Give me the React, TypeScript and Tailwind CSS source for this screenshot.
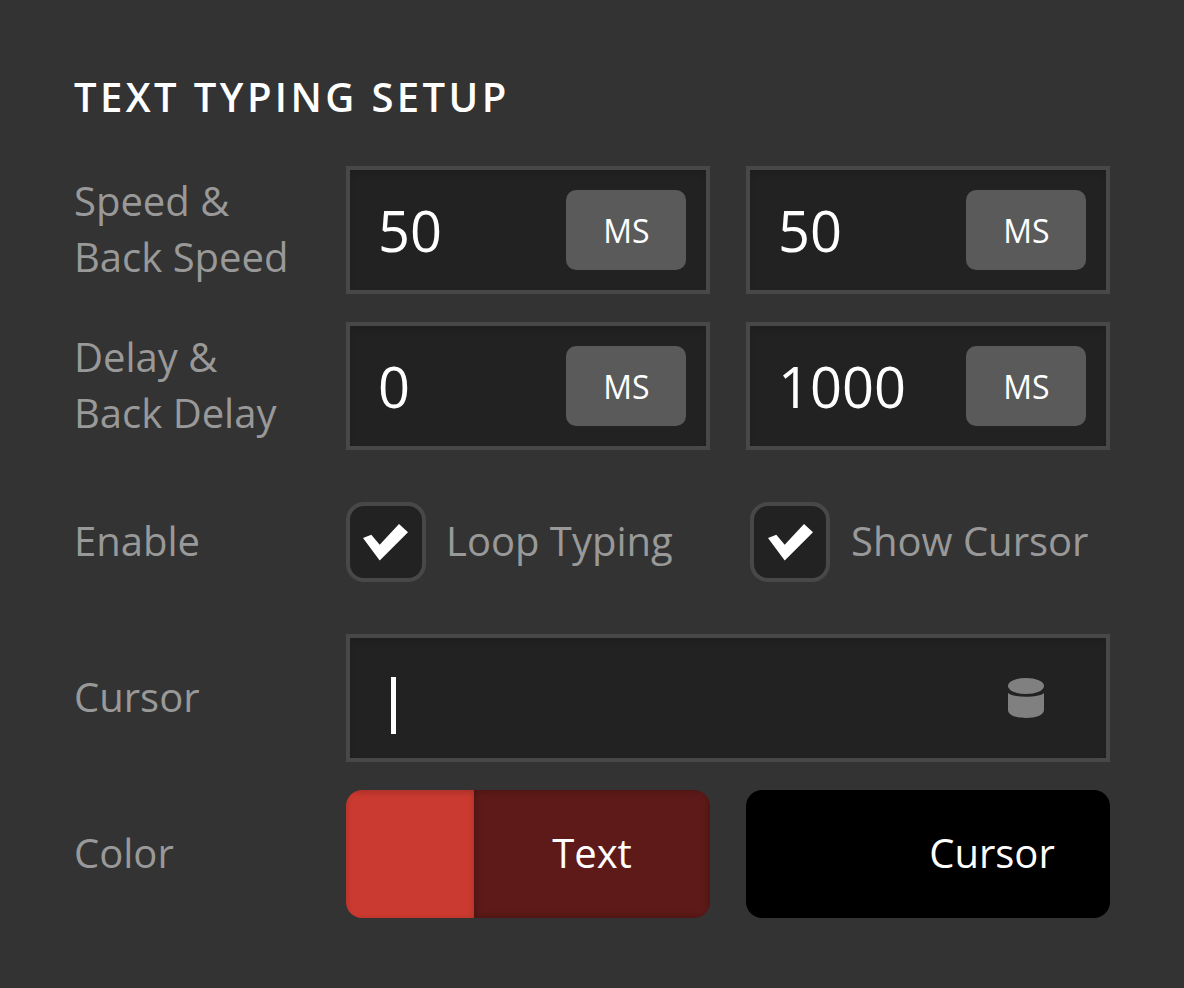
const ff = "font-['Open_Sans',sans-serif]";

function Check({ className }: { className?: string }) {
  return (
    <svg viewBox="0 0 45 37" className={`h-[37px] w-[45px] ${className ?? ""}`}>
      <path d="M0 14 L8.3 10.7 L16.7 20.7 L36 0 L45 8.3 L16.7 36.5 Z" fill="#fff" />
    </svg>
  );
}

function Field({ value }: { value: string }) {
  return (
    <div className="flex h-[128px] w-[364px] items-center justify-between border-4 border-[#484848] bg-[#222222] pl-[28px] pr-5 shadow-[inset_0_4px_6px_rgba(0,0,0,0.12)]">
      <span className="text-[56px] leading-none text-white">{value}</span>
      <span className="flex h-[80px] w-[120px] items-center justify-center rounded-[10px] bg-[#5a5a5a] pl-[1px] pt-[2px] text-[32px] text-white">
        MS
      </span>
    </div>
  );
}

function Toggle({ label, className, checkClass }: { label: string; className: string; checkClass?: string }) {
  return (
    <div className={`flex items-center ${className}`}>
      <span className="flex h-[80px] w-[80px] items-center justify-center rounded-[18px] border-4 border-[#484848] bg-[#222222]">
        <Check className={checkClass} />
      </span>
      <span className="-mt-[2px] text-[40px] text-[#999999]">{label}</span>
    </div>
  );
}

function Swatch({ label, left, right }: { label: string; left: string; right: string }) {
  return (
    <div className="flex h-[128px] w-[364px] overflow-hidden rounded-[16px]">
      <div className={`h-full w-[128px] ${left}`} />
      <div className={`flex flex-1 items-center justify-center text-[40px] text-white ${right}`}>
        <span className="-mt-[2px]">{label}</span>
      </div>
    </div>
  );
}

function Label({ children }: { children: React.ReactNode }) {
  return <div className="-mt-[2px] text-[40px] leading-[56px] text-[#999999]">{children}</div>;
}

export default function App() {
  return (
    <div className={`h-[988px] w-[1184px] bg-[#333333] pl-[74px] pt-[72px] ${ff}`}>
      <h1 className="h-[50px] text-[40px] font-semibold leading-[50px] tracking-[0.085em] text-white">TEXT TYPING SETUP</h1>
      <div className="mt-[44px] grid grid-cols-[236px_364px_364px] grid-rows-[repeat(5,128px)] items-center gap-x-[36px] gap-y-[28px]">
        <Label>Speed &amp;<br />Back Speed</Label>
        <Field value="50" />
        <Field value="50" />
        <Label>Delay &amp;<br />Back Delay</Label>
        <Field value="0" />
        <Field value="1000" />
        <Label>Enable</Label>
        <Toggle label="Loop Typing" className="gap-[20px]" checkClass="-ml-[1px]" />
        <Toggle label="Show Cursor" className="ml-1 gap-[21px]" checkClass="ml-[1px]" />
        <Label>Cursor</Label>
        <div className="col-span-2 flex h-[128px] w-[764px] items-center justify-between border-4 border-[#484848] bg-[#222222] pl-[41px] pr-[62px] shadow-[inset_0_4px_6px_rgba(0,0,0,0.12)]">
          <span className="mt-[15px] h-[57px] w-[5px] bg-white" />
          <svg viewBox="0 0 36 40" className="h-[40px] w-[36px]">
            <ellipse cx="18" cy="8" rx="18" ry="8" fill="#808080" />
            <path d="M0 15 C5 20 31 20 36 15 V32 C36 37 28 40 18 40 C8 40 0 37 0 32 Z" fill="#808080" />
          </svg>
        </div>
        <Label>Color</Label>
        <Swatch label="Text" left="bg-[#cb3a30] shadow-[inset_0_2px_6px_rgba(0,0,0,0.2)]" right="bg-[#5e1a18] shadow-[inset_0_0_8px_rgba(0,0,0,0.3)]" />
        <Swatch label="Cursor" left="bg-black" right="bg-black" />
      </div>
    </div>
  );
}
